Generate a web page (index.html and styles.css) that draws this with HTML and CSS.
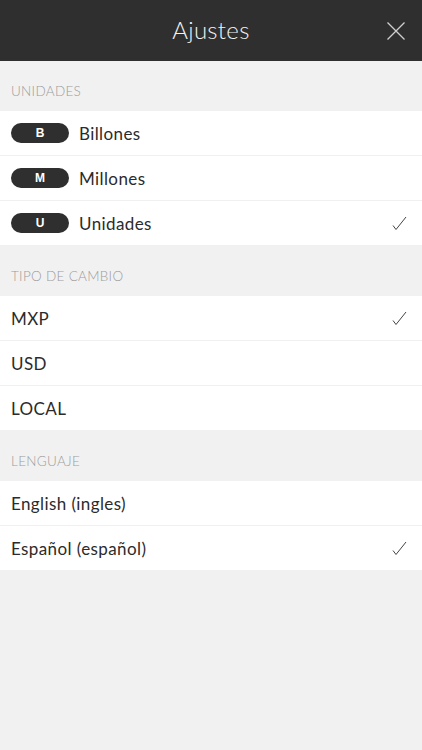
FILE: index.html
```html
<!DOCTYPE html>
<html lang="es">
<head>
<meta charset="utf-8">
<title>Ajustes</title>
<link rel="stylesheet" href="styles.css">
</head>
<body>
<div class="app">
  <header class="topbar">
    <h1 class="title">Ajustes</h1>
    <button class="close" aria-label="Cerrar">
      <svg width="18" height="18" viewBox="0 0 18 18"><path d="M0.5 0.5 L17.5 17.5 M17.5 0.5 L0.5 17.5" stroke="#cfcfcf" stroke-width="1.3" fill="none"/></svg>
    </button>
  </header>

  <section class="group">
    <div class="group-title">UNIDADES</div>
    <ul class="list">
      <li class="row"><span class="pill">B</span><span class="label">Billones</span></li>
      <li class="row"><span class="pill">M</span><span class="label">Millones</span></li>
      <li class="row"><span class="pill">U</span><span class="label">Unidades</span><svg class="check" width="15" height="15" viewBox="0 0 15 15"><path d="M1 9.5 L4 13.5 L14 1" stroke="#444" stroke-width="1" fill="none"/></svg></li>
    </ul>
  </section>

  <section class="group">
    <div class="group-title">TIPO DE CAMBIO</div>
    <ul class="list">
      <li class="row"><span class="label">MXP</span><svg class="check" width="15" height="15" viewBox="0 0 15 15"><path d="M1 9.5 L4 13.5 L14 1" stroke="#444" stroke-width="1" fill="none"/></svg></li>
      <li class="row"><span class="label">USD</span></li>
      <li class="row"><span class="label">LOCAL</span></li>
    </ul>
  </section>

  <section class="group">
    <div class="group-title">LENGUAJE</div>
    <ul class="list">
      <li class="row"><span class="label">English (ingles)</span></li>
      <li class="row"><span class="label">Español (español)</span><svg class="check" width="15" height="15" viewBox="0 0 15 15"><path d="M1 9.5 L4 13.5 L14 1" stroke="#444" stroke-width="1" fill="none"/></svg></li>
    </ul>
  </section>
</div>
</body>
</html>
```

FILE: styles.css
```css
* { box-sizing: border-box; }
html, body {
  margin: 0;
  padding: 0;
  height: 100%;
  background: #f1f1f1;
}
body {
  font-family: "Lato", "Open Sans", "DejaVu Sans", sans-serif;
  color: #2e2e2e;
}
.app {
  width: 422px;
  min-height: 750px;
  background: #f1f1f1;
}
.topbar {
  height: 61px;
  background: #2f2f2f;
  display: flex;
  align-items: center;
  justify-content: center;
  position: relative;
}
.title {
  margin: 0;
  font-size: 24px;
  font-weight: 300;
  color: #f2f2f2;
  letter-spacing: 0.3px;
  padding-bottom: 2px;
}
.close {
  position: absolute;
  right: 17px;
  top: 22px;
  width: 18px;
  height: 18px;
  padding: 0;
  border: 0;
  background: none;
  display: block;
}
.close svg { display: block; }
.group-title {
  height: 51px;
  padding: 23px 0 0 11px;
  font-size: 13.5px;
  font-weight: 300;
  color: #9c9c9c;
  letter-spacing: 0.3px;
  line-height: 16px;
}
.group:first-of-type .group-title {
  height: 50px;
  padding-top: 22px;
}
.list {
  list-style: none;
  margin: 0;
  padding: 0;
  background: #fff;
}
.row {
  height: 45px;
  display: flex;
  align-items: center;
  padding: 0 15px 0 11px;
  border-top: 1px solid #f0f0f0;
}
.row:first-child { border-top: 0; height: 44px; }
.pill {
  width: 58px;
  height: 20px;
  border-radius: 10px;
  background: #2f2f2f;
  color: #fff;
  font-family: "Liberation Sans", Arial, sans-serif;
  font-weight: bold;
  font-size: 12px;
  display: flex;
  align-items: center;
  justify-content: center;
  margin-right: 10px;
}
.label {
  font-size: 17px;
  color: #2b2b2b;
  letter-spacing: 0.4px;
  flex: 1;
}
.check { display: block; flex: none; }
```
